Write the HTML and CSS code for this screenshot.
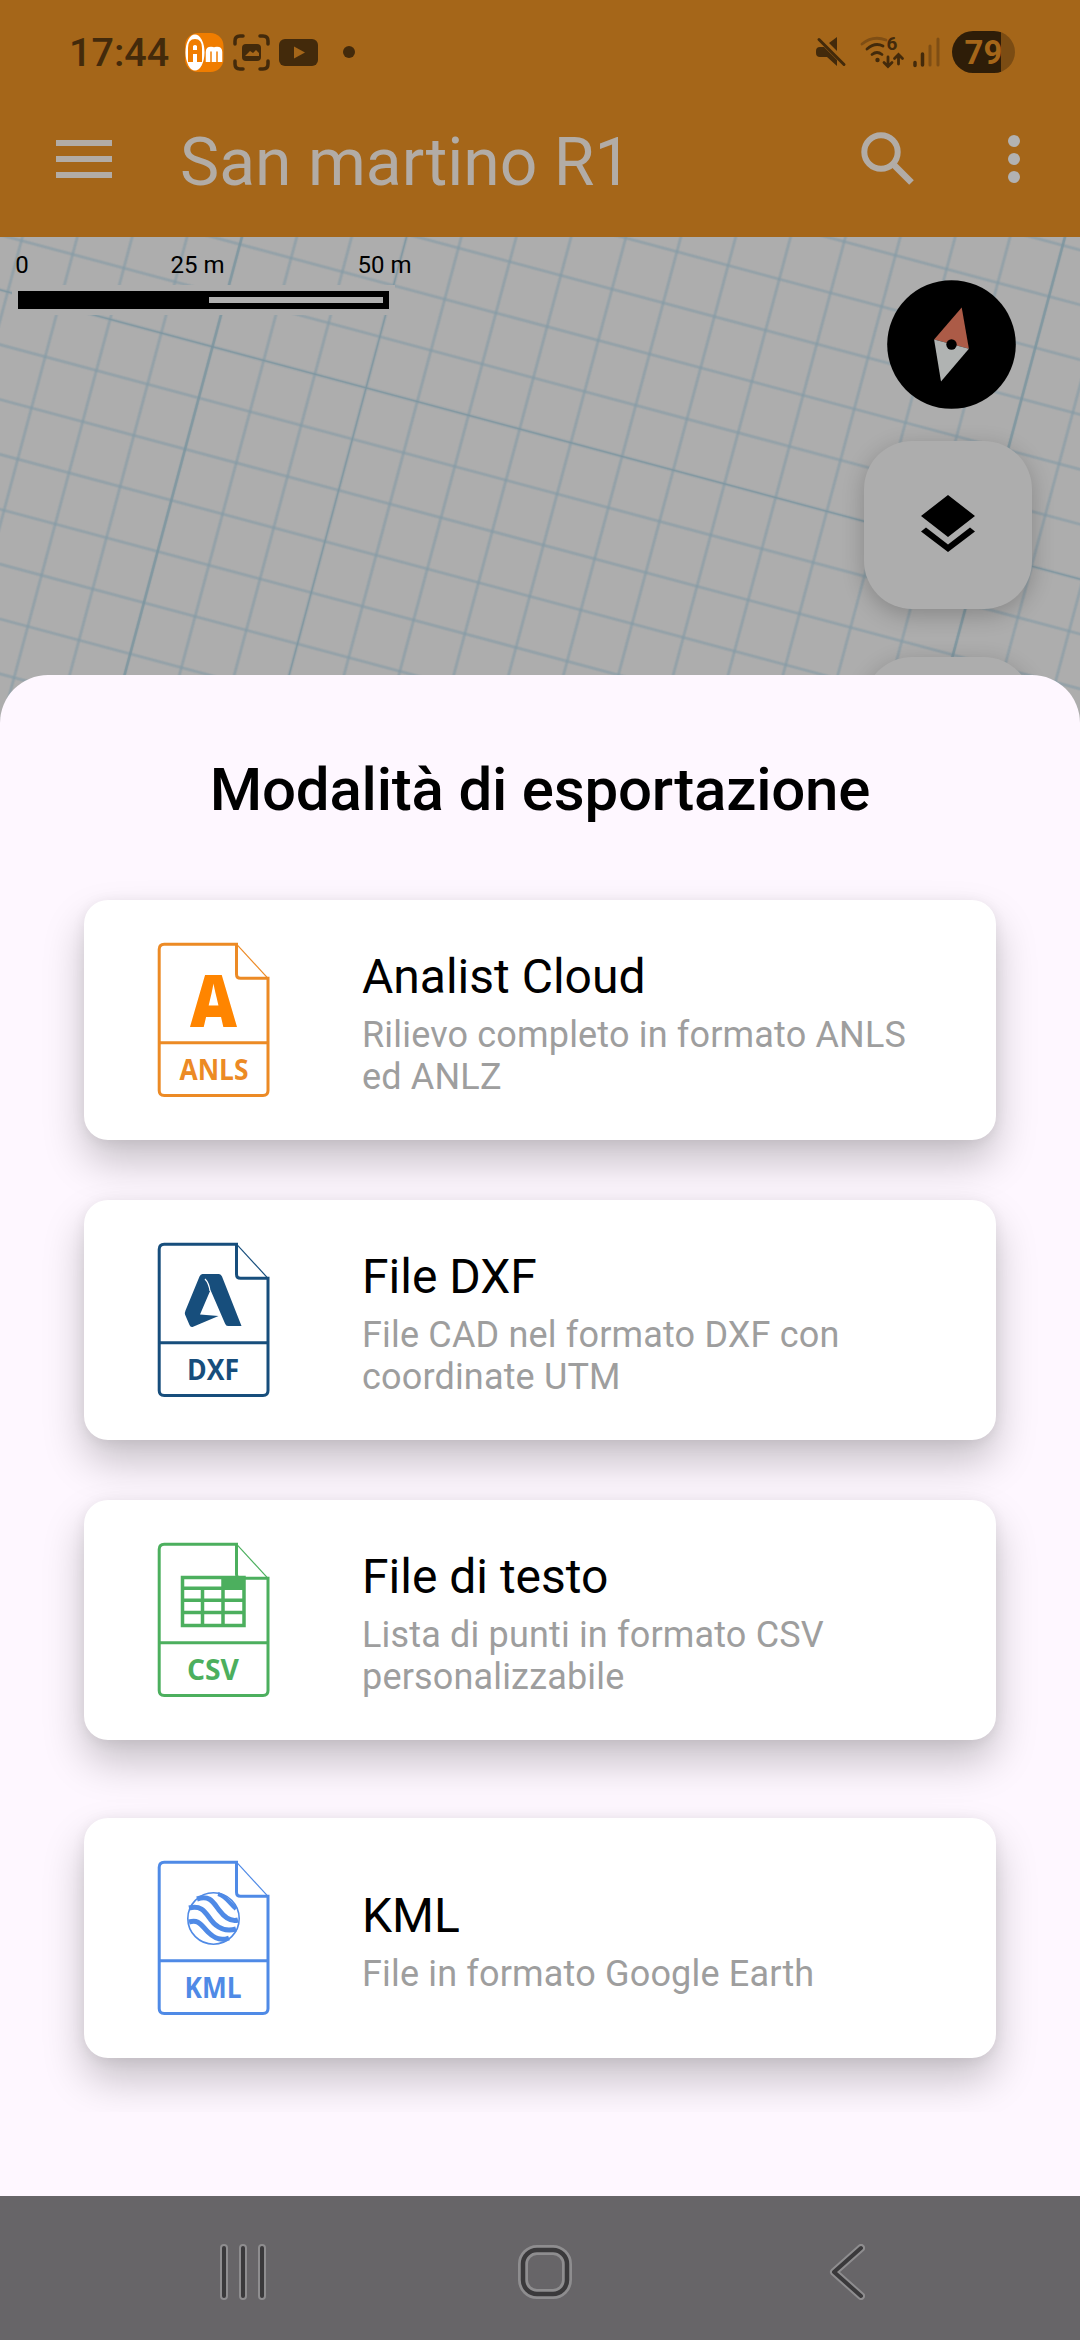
FILE: index.html
```html
<!DOCTYPE html>
<html lang="it">
<head>
    <meta charset="UTF-8">
    <meta name="viewport" content="width=device-width, initial-scale=1.0">
    <title>San martino R1</title>
    <link rel="stylesheet" href="styles.css">
</head>
<body>
    <header class="header">
        <div class="status-bar">
            <span class="clock">17:44</span>
            <svg class="status-left" width="172" height="42" viewBox="184 31 172 42">
                <rect x="185" y="33" width="38.500" height="39" rx="13" fill="#f07d00"/>
                <ellipse cx="195" cy="52.500" rx="9.500" ry="18" fill="#fff"/>
                <path d="M188 62V48q0-9 7-9t7 9v14h-5v-8h-4v8zM193 50h4v-4q-2-2-4 0z" fill="#f07d00"/>
                <path d="M208 62V52q0-3 3-3t3 3v10M214 52q0-3 3-3t3 3v10" fill="none" stroke="#fff" stroke-width="4.500"/>
                <path d="M235 44v-3q0-5 5-5h3M260 36h3q5 0 5 5v3M268 61v3q0 5-5 5h-3M243 69h-3q-5 0-5-5v-3" fill="none" stroke="#432a0b" stroke-width="3.500" stroke-linecap="round"/>
                <rect x="242" y="44" width="19" height="17" rx="4" fill="#432a0b"/>
                <path d="M245 56l5-5 3 2 3-3 3 3v3z" fill="#a56619"/>
                <rect x="279" y="39" width="39" height="27" rx="6" fill="#432a0b"/>
                <path d="M294 46.500v12l11-6z" fill="#a56619"/>
                <circle cx="349" cy="52" r="6" fill="#432a0b"/>
            </svg>
            <svg class="status-right" width="126" height="42" viewBox="815 31 126 42">
                <g fill="#432a0b">
                    <path d="M837 37v14l-8-8zM816 51q0-4 4-4h4l13 13v6l-10-9h-7q-4 0-4-4z"/>
                    <path d="M819 39.500l25 25" stroke="#432a0b" stroke-width="3" stroke-linecap="round"/>
                    <circle cx="877.500" cy="60" r="2.200"/>
                </g>
                <g fill="none" stroke="#432a0b" stroke-width="2.800" stroke-linecap="round">
                    <path d="M862 44q11-9 24-4" stroke="#7f4e14"/>
                    <path d="M867 49q8-7 16-3M872 54.500q5-4 10 0"/>
                    <path d="M888 57v9m-4-3.500l4 4 4-4M898.500 64v-9m-4 3.500l4-4 4 4"/>
                    <path d="M915 62.500v3M922.500 54v11" stroke-width="3.500"/>
                    <path d="M930 46v19M938 39v26" stroke="#7f4e14" stroke-width="3"/>
                </g>
                <text class="wifi-six" x="886.500" y="50">6</text>
            </svg>
            <div class="battery">79</div>
        </div>
        <div class="app-bar">
            <svg class="menu" width="56" height="38" viewBox="0 0 56 38">
                <path d="M0 3h56M0 19h56M0 35h56" stroke="#b2aca6" stroke-width="6"/>
            </svg>
            <h1 class="project">San martino R1</h1>
            <svg class="search" width="54" height="54" viewBox="0 0 54 54" fill="none" stroke="#b2aca6">
                <circle cx="20" cy="20" r="16.700" stroke-width="6"/>
                <path d="M33 33l17.500 17.500" stroke-width="6.500"/>
            </svg>
            <svg class="more" width="12" height="50" viewBox="0 0 12 50" fill="#b2b2b2">
                <circle cx="6" cy="7" r="6"/>
                <circle cx="6" cy="25" r="6"/>
                <circle cx="6" cy="43" r="6"/>
            </svg>
        </div>
    </header>

    <main class="map">
        <!-- squared paper: each dashed stroke is a full set of parallel lines -->
        <svg class="grid" width="1080" height="490" viewBox="0 0 1080 490">
            <g transform="translate(212.500 109.700) rotate(15)" fill="none">
                <g stroke="#8ba0aa" stroke-opacity=".3" stroke-width="1600" stroke-dasharray="4 49">
                    <path d="M-532 0H1200"/>
                    <path d="M300-532V900"/>
                </g>
                <g stroke="#869ca6" stroke-opacity=".45" stroke-width="1600" stroke-dasharray="2 51">
                    <path d="M-531 0H1200"/>
                    <path d="M300-531V900"/>
                </g>
                <g stroke="#78929d" stroke-opacity=".6">
                    <path d="M0-400V500M795-400V300" stroke-width="2.500"/>
                    <path d="M-300 0H1000M159-300V500" stroke-width="1.200"/>
                </g>
            </g>
        </svg>
        <div class="scale">
            <div class="scale-labels">
                <span>0</span>
                <span>25 m</span>
                <span>50 m</span>
            </div>
            <div class="scale-bar"><div class="scale-half"></div></div>
        </div>
        <div class="map-buttons">
            <svg class="compass" width="129" height="129" viewBox="886.500 280.500 129 129">
                <circle cx="951" cy="345" r="64.300"/>
                <path d="M961.200 308l-27.600 32 34.800 9.300z" fill="#ac5b47"/>
                <path d="M940.500 382l-6.900-42 34.800 9.300z" fill="#b0b3b2"/>
                <circle cx="951" cy="345" r="5.200"/>
            </svg>
            <div class="map-button">
                <svg width="54" height="57" viewBox="0 0 54 57">
                    <path d="M27 0l27 21-27 21L0 21zM0 36.500l5-4 22 17 22-17 5 4L27 57z"/>
                </svg>
            </div>
            <div class="map-button"></div>
        </div>
    </main>

    <section class="sheet">
        <h2 class="sheet-title">Modalità di esportazione</h2>
        <div class="options">
            <div class="card">
                <svg class="file anls" width="150" height="200" viewBox="0 0 150 200">
                    <path class="page" d="M96.500 24.200H24.200q-5 0-5 5v141.300q0 5 5 5H123q5 0 5-5V58.300h-27.500q-4 0-4-4zM19.200 122.700H128"/>
                    <path class="fold" d="M96.500 24.200L128 58.300"/>
                    <text class="letter" x="50" y="107" textLength="47" lengthAdjust="spacingAndGlyphs">A</text>
                    <text class="ext" x="39.500" y="160" textLength="69" lengthAdjust="spacingAndGlyphs">ANLS</text>
                </svg>
                <div class="info">
                    <h3 class="name">Analist Cloud</h3>
                    <p class="text">Rilievo completo in formato ANLS ed ANLZ</p>
                </div>
            </div>
            <div class="card">
                <svg class="file dxf" width="150" height="200" viewBox="0 0 150 200">
                    <path class="page" d="M96.500 24.200H24.200q-5 0-5 5v141.300q0 5 5 5H123q5 0 5-5V58.300h-27.500q-4 0-4-4zM19.200 122.700H128"/>
                    <path class="fold" d="M96.500 24.200L128 58.300"/>
                    <path d="M62.500 54H79q2 0 3 2.500L101.500 106H88q-2 0-3-2.500L70.500 70 60 94.500l18.500 1.500L52.500 107q-2 .5-3-2L45 94.500q-.5-1.500.5-4L59.500 56.500q1-2.500 3-2.500z" fill="#174e7c"/>
                    <path d="M65 59q4 4 5 12" fill="none" stroke="#fff" stroke-width="1.200"/>
                    <text class="ext" x="47" y="160" textLength="52" lengthAdjust="spacingAndGlyphs">DXF</text>
                </svg>
                <div class="info">
                    <h3 class="name">File DXF</h3>
                    <p class="text">File CAD nel formato DXF con coordinate UTM</p>
                </div>
            </div>
            <div class="card">
                <svg class="file csv" width="150" height="200" viewBox="0 0 150 200">
                    <path class="page" d="M96.500 24.200H24.200q-5 0-5 5v141.300q0 5 5 5H123q5 0 5-5V58.300h-27.500q-4 0-4-4zM19.200 122.700H128"/>
                    <path class="fold" d="M96.500 24.200L128 58.300"/>
                    <path d="M42.500 57.500H104v48H42.500zM42.500 68.300H104M42.500 80.300H104M42.500 92.500H104M62.500 68.300v37M83 57.500v48" fill="none" stroke="#4caf5e" stroke-width="3.500"/>
                    <path d="M83 57h22v12H83z" fill="#4caf5e"/>
                    <text class="ext" x="47" y="160" textLength="52" lengthAdjust="spacingAndGlyphs">CSV</text>
                </svg>
                <div class="info">
                    <h3 class="name">File di testo</h3>
                    <p class="text">Lista di punti in formato CSV personalizzabile</p>
                </div>
            </div>
            <div class="card card-last">
                <svg class="file kml" width="150" height="200" viewBox="0 0 150 200">
                    <path class="page" d="M96.500 24.200H24.200q-5 0-5 5v141.300q0 5 5 5H123q5 0 5-5V58.300h-27.500q-4 0-4-4zM19.200 122.700H128"/>
                    <path class="fold" d="M96.500 24.200L128 58.300"/>
                    <g fill="none" stroke="#4f8ae6" transform="translate(0 2)">
                        <circle cx="73.500" cy="78.500" r="25.700" stroke-width="1.600"/>
                        <path d="M57 59c13-4 16 3 22 11s12 12 19 10M49 68c13-3 16 4 22 12s15 12 25 9M49 82c10-3 12 3 19 10s13 9 21 6" stroke-width="5"/>
                        <path d="M78 54c8 2 12 10 18 15" stroke-width="4"/>
                    </g>
                    <text class="ext" x="44.500" y="160" textLength="57" lengthAdjust="spacingAndGlyphs">KML</text>
                </svg>
                <div class="info">
                    <h3 class="name">KML</h3>
                    <p class="text">File in formato Google Earth</p>
                </div>
            </div>
        </div>
    </section>

    <nav class="nav">
        <svg width="46" height="56" viewBox="0 0 46 56" fill="none" stroke-linecap="round">
            <path d="M4 4v48M23 4v48M42 4v48" stroke="#8e8d8f" stroke-width="8"/>
            <path d="M4 4v48M23 4v48M42 4v48" stroke="#3a393b" stroke-width="4"/>
        </svg>
        <svg class="home" width="54" height="54" viewBox="0 0 54 54" fill="none">
            <rect x="5" y="5" width="44" height="44" rx="14" stroke="#8e8d8f" stroke-width="10"/>
            <rect x="5" y="5" width="44" height="44" rx="14" stroke="#3a393b" stroke-width="4.500"/>
        </svg>
        <svg width="36" height="56" viewBox="0 0 36 56" fill="none" stroke-linecap="round" stroke-linejoin="round">
            <path d="M32 4L5 28l27 24" stroke="#8e8d8f" stroke-width="8"/>
            <path d="M32 4L5 28l27 24" stroke="#3a393b" stroke-width="4"/>
        </svg>
    </nav>
</body>
</html>
```
FILE: styles.css
```css
* {
    box-sizing: border-box;
}
body {
    font-family: Roboto, sans-serif;
    margin: 0;
    width: 1080px;
    height: 2340px;
    display: flex;
    flex-direction: column;
    background-color: #fef7ff;
    overflow: hidden;
}
svg {
    display: block;
    flex-shrink: 0;
}
h1, h2, h3, p {
    margin: 0;
    font-weight: normal;
}

/* Header */
.header {
    height: 237px;
    flex-shrink: 0;
    background-color: #a56619;
}
.status-bar {
    display: flex;
    align-items: center;
    height: 104px;
    padding-left: 69px;
    padding-right: 65px;
}
.clock {
    width: 115px;
    font-size: 39.5px;
    font-weight: 500;
    color: #432a0b;
}
.status-right {
    margin-left: auto;
}
.wifi-six {
    font-size: 19px;
    font-weight: bold;
    fill: #432a0b;
}
.battery {
    width: 63px;
    height: 42px;
    margin-left: 11px;
    border-radius: 21px;
    background: linear-gradient(to right, #2e1d08 49px, #7b4c13 49px);
    color: #a56619;
    font-size: 33px;
    font-weight: bold;
    line-height: 43px;
    text-align: center;
}
.app-bar {
    display: flex;
    align-items: center;
    height: 110px;
    padding-left: 56px;
    padding-right: 60px;
}
.project {
    margin-left: 68px;
    padding-top: 6px;
    font-size: 66px;
    color: #b2aca6;
}
.search {
    margin-left: auto;
}
.more {
    margin-left: 93px;
}

/* Map */
.map {
    position: relative;
    height: 486px;
    flex-shrink: 0;
    background-color: #adadad;
    overflow: hidden;
}
.grid {
    position: absolute;
    top: 0;
    left: 0;
}
.scale {
    position: absolute;
    top: 14px;
    left: 12px;
}
.scale-labels {
    display: flex;
    height: 34px;
    font-size: 24px;
    line-height: 28px;
}
.scale-labels span {
    width: 187px;
    text-align: center;
}
.scale-labels span:first-child {
    width: 14px;
    margin-left: 3px;
    margin-right: 75px;
}
.scale-bar {
    width: 383px;
    height: 30px;
    border: 6px solid #adadad;
    background-color: #000;
    padding: 6px;
}
.scale-half {
    width: 174px;
    height: 6px;
    margin-left: auto;
    background-color: #b0b0b0;
}
.map-buttons {
    position: absolute;
    top: 43px;
    right: 48px;
    display: flex;
    flex-direction: column;
    align-items: center;
}
.compass {
    margin-left: 6px;
    margin-bottom: 32px;
}
.map-button {
    display: flex;
    align-items: center;
    justify-content: center;
    width: 168px;
    height: 168px;
    margin-bottom: 48px;
    padding-bottom: 3px;
    border-radius: 48px;
    background-color: #adadad;
    box-shadow: 0 6px 22px rgba(0, 0, 0, 0.22);
}

/* Bottom sheet */
.sheet {
    position: relative;
    height: 1521px;
    flex-shrink: 0;
    margin-top: -48px;
    border-radius: 48px 48px 0 0;
    background-color: #fef7ff;
}
.sheet-title {
    padding-top: 79px;
    height: 189px;
    font-size: 60px;
    font-weight: 500;
    line-height: 72px;
    letter-spacing: -0.2px;
    text-align: center;
}
.options {
    height: 1248px;
    padding: 36px 84px 0;
    overflow: hidden; /* cuts the last shadow */
}
.card {
    display: flex;
    align-items: center;
    height: 240px;
    margin-bottom: 60px;
    padding-left: 56px;
    border-radius: 24px;
    background-color: #fff;
    box-shadow: 0 22px 42px rgba(0, 0, 0, 0.22), 0 2px 14px rgba(0, 0, 0, 0.07);
}
.card-last {
    margin-top: 78px;
}
.info {
    width: 570px;
    margin-left: 72px;
    padding-top: 6px;
}
.name {
    margin-bottom: 9px;
    font-size: 48px;
    line-height: 56px;
}
.text {
    font-size: 36px;
    line-height: 42px;
    letter-spacing: 0.17px;
    color: #9e9e9e;
}

/* File icons */
.page {
    fill: none;
    stroke: currentColor;
    stroke-width: 3;
}
.fold {
    fill: none;
    stroke: currentColor;
    stroke-width: 1.2;
}
.ext {
    font-family: "Open Sans", sans-serif;
    font-size: 29px;
    font-weight: 700;
    fill: currentColor;
}
.letter {
    font-family: "Open Sans", sans-serif;
    font-size: 73px;
    font-weight: 800;
    fill: #ff8500;
}
.anls {
    color: #ec8a25;
}
.dxf {
    color: #174e7c;
}
.csv {
    color: #4caf5e;
}
.kml {
    color: #4f8ae6;
}

/* Navigation bar */
.nav {
    display: flex;
    align-items: center;
    justify-content: space-between;
    height: 144px;
    padding: 8px 215px 0 220px;
    background-color: #676568;
}
.home {
    margin-right: 5px;
}
```
